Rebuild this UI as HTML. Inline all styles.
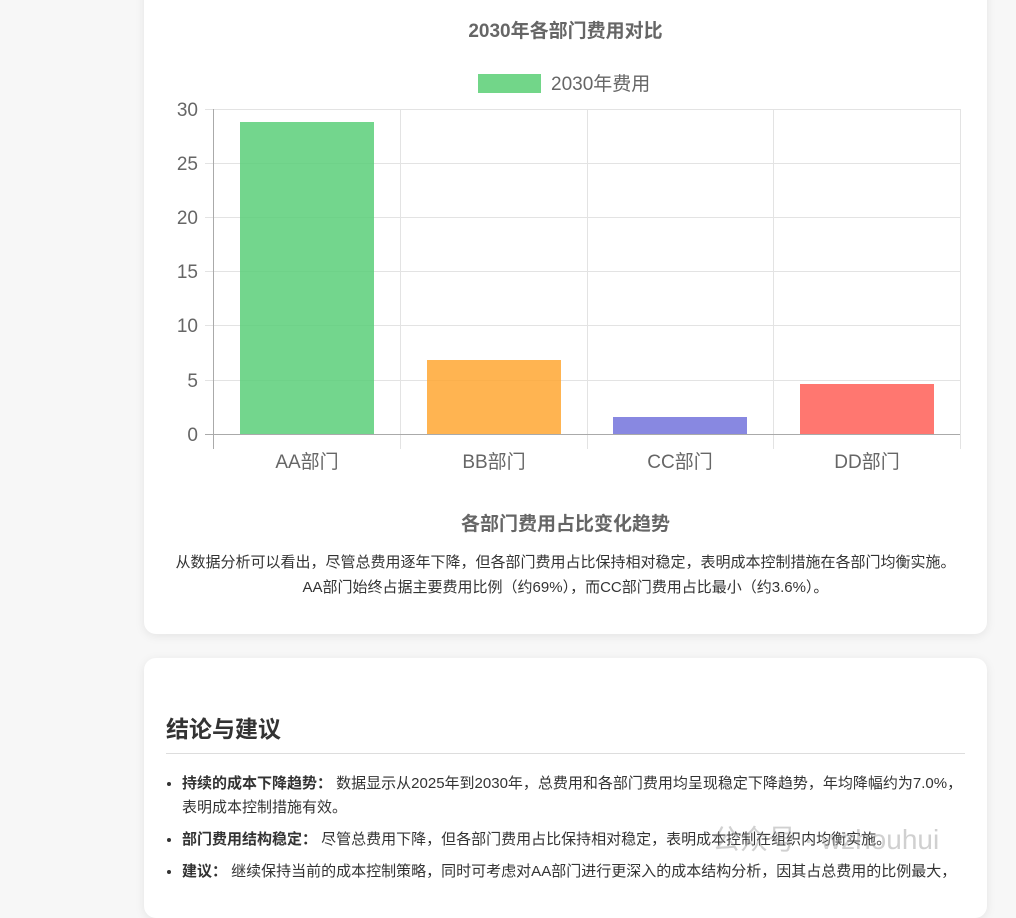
<!DOCTYPE html>
<html><head><meta charset="utf-8"><style>
body{margin:0;width:1016px;height:880px;background:#f7f7f7;overflow:hidden;font-family:"Liberation Sans","Noto Sans CJK SC",sans-serif;position:relative}
.card{position:absolute;left:144px;width:843px;background:#fff;border-radius:12px;box-shadow:0 2px 10px rgba(0,0,0,0.08)}
.t{position:absolute;left:0;width:100%;text-align:center;font-weight:bold;color:#666;font-size:19px}
p.d{position:absolute;left:0;width:100%;text-align:center;margin:0;font-size:15px;line-height:25px;color:#333}
h2{position:absolute;left:22px;top:52px;margin:0;font-size:23px;color:#333;font-weight:bold}
.hr{position:absolute;left:22px;right:22px;top:95px;border-top:1px solid #ddd}
ul{position:absolute;left:22px;top:114px;margin:0;padding-left:16px;width:784px;font-size:15px;line-height:24px;color:#333}
li{margin-bottom:8px}
</style></head><body>
<div class="card" style="top:-20px;height:654px">
<div class="t" style="top:36px">2030年各部门费用对比</div>
<div class="t" style="top:529px">各部门费用占比变化趋势</div>
<p class="d" style="top:570px">从数据分析可以看出，尽管总费用逐年下降，但各部门费用占比保持相对稳定，表明成本控制措施在各部门均衡实施。<br>AA部门始终占据主要费用比例（约69%），而CC部门费用占比最小（约3.6%）。</p>
</div>
<svg style="position:absolute;left:0;top:0" width="1016" height="500" font-family="Liberation Sans,Noto Sans CJK SC,sans-serif">
<rect x="478" y="74" width="63" height="19" fill="#72d689"/>
<text x="551" y="90" font-size="19" fill="#666">2030年费用</text>
<g stroke="#e3e3e3" stroke-width="1">
<line x1="205" y1="109.5" x2="960" y2="109.5"/><line x1="205" y1="163.5" x2="960" y2="163.5"/>
<line x1="205" y1="217.5" x2="960" y2="217.5"/><line x1="205" y1="271.5" x2="960" y2="271.5"/>
<line x1="205" y1="325.5" x2="960" y2="325.5"/><line x1="205" y1="380.5" x2="960" y2="380.5"/>
<line x1="400.5" y1="109" x2="400.5" y2="449"/><line x1="587.5" y1="109" x2="587.5" y2="449"/>
<line x1="773.5" y1="109" x2="773.5" y2="449"/><line x1="960.5" y1="109" x2="960.5" y2="449"/>
</g>
<line x1="213.5" y1="109" x2="213.5" y2="449" stroke="#aaa"/>
<line x1="205" y1="434.5" x2="960" y2="434.5" stroke="#aaa"/>
<rect x="240" y="122" width="134" height="312" fill="#5acf79" opacity="0.85"/>
<rect x="427" y="360" width="134" height="74" fill="#ffa733" opacity="0.85"/>
<rect x="613" y="417" width="134" height="17" fill="#7373dc" opacity="0.85"/>
<rect x="800" y="384" width="134" height="50" fill="#ff5f57" opacity="0.85"/>
<g font-size="19" fill="#666" text-anchor="end">
<text x="198" y="116">30</text><text x="198" y="170">25</text><text x="198" y="224">20</text>
<text x="198" y="278">15</text><text x="198" y="332">10</text><text x="198" y="387">5</text><text x="198" y="441">0</text>
</g>
<g font-size="19" fill="#666" text-anchor="middle">
<text x="307" y="468">AA部门</text><text x="494" y="468">BB部门</text><text x="680" y="468">CC部门</text><text x="867" y="468">DD部门</text>
</g>
</svg>
<div class="card" style="top:658px;height:260px">
<h2>结论与建议</h2>
<div class="hr"></div>
<ul>
<li><b>持续的成本下降趋势：</b> 数据显示从2025年到2030年，总费用和各部门费用均呈现稳定下降趋势，年均降幅约为7.0%，表明成本控制措施有效。</li>
<li><b>部门费用结构稳定：</b> 尽管总费用下降，但各部门费用占比保持相对稳定，表明成本控制在组织内均衡实施。</li>
<li><b>建议：</b> 继续保持当前的成本控制策略，同时可考虑对AA部门进行更深入的成本结构分析，因其占总费用的比例最大，</li>
</ul>
</div>
<div style="position:absolute;left:712px;top:818px;font-size:28px;color:rgba(150,150,150,0.45)">公众号 · wzhouhui</div>
</body></html>
